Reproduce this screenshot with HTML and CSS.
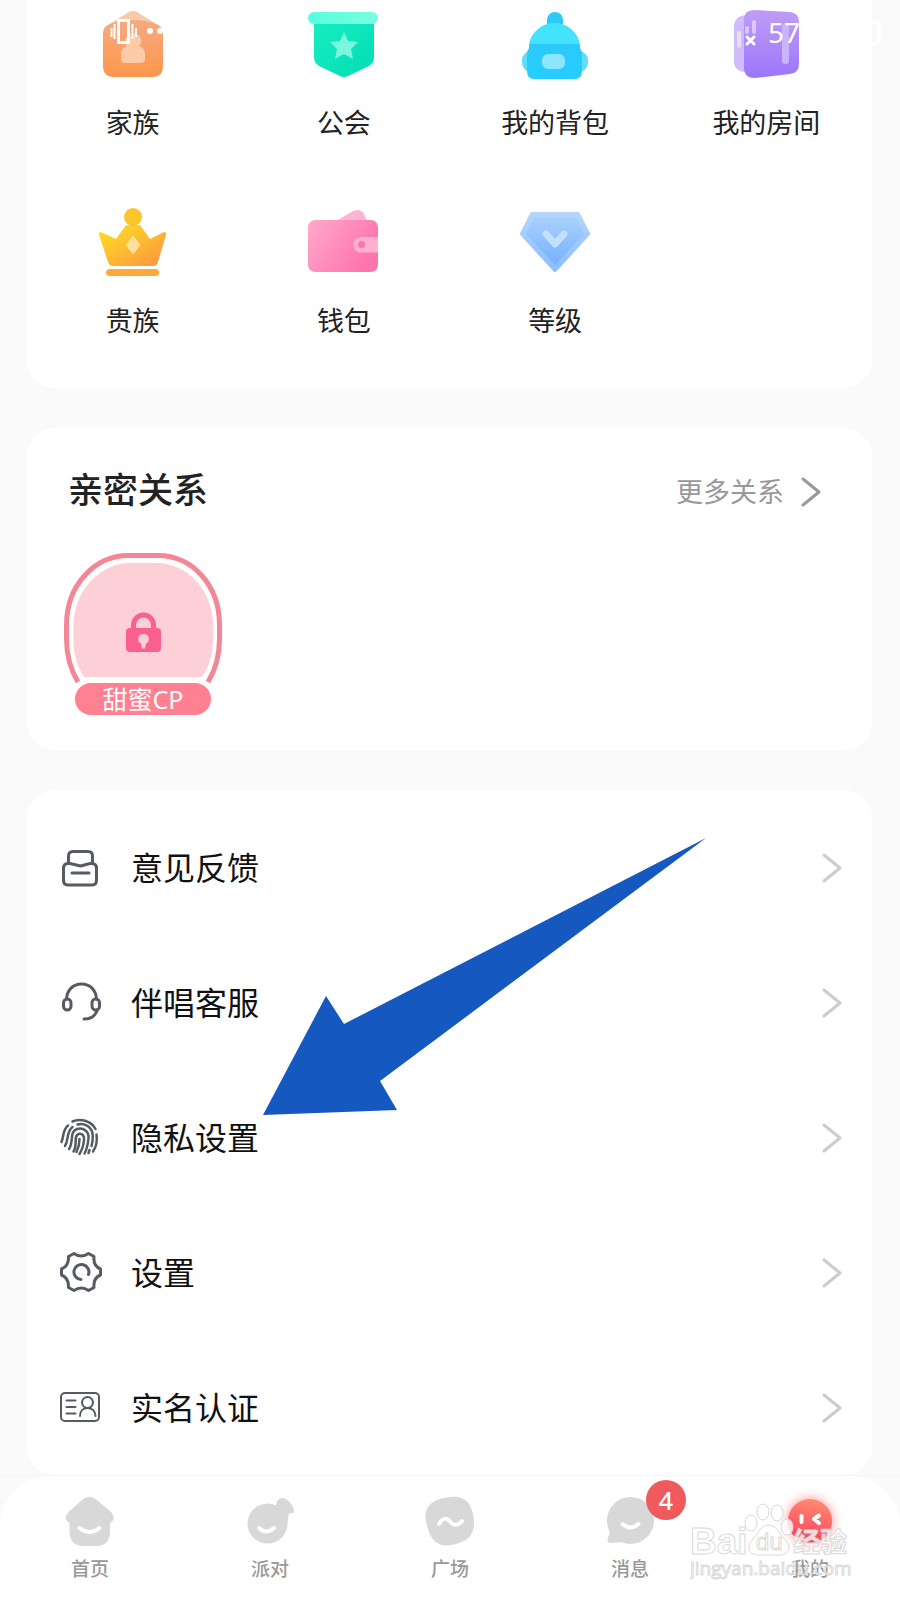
FILE: index.html
```html
<!DOCTYPE html>
<html lang="zh-CN">
<head>
<meta charset="utf-8">
<meta name="viewport" content="width=device-width, initial-scale=1">
<title>我的</title>
<link rel="stylesheet" href="styles.css">
</head>
<body>
<div class="status">
  <svg class="status-left" viewBox="0 0 56 32" aria-hidden="true">
    <rect x="8.500" y="6.500" width="10" height="22" fill="none" stroke="#fff" stroke-width="3"/>
    <path d="M1.500 14v9M4.500 10v15M22.500 10v15M26 14v9" stroke="#fff" stroke-width="2"/>
    <circle cx="40" cy="17" r="3" fill="#fff"/><circle cx="50" cy="17" r="3" fill="#fff"/>
  </svg>
  <div class="status-right">
    <svg class="signal" viewBox="0 0 32 32" aria-hidden="true">
      <path d="M7 17v13M15 12v4M22 6v10" stroke="#fff" stroke-opacity=".5" stroke-width="4" stroke-linecap="round"/>
      <path d="M15 21l7 7M22 21l-7 7" stroke="#fff" stroke-width="3" stroke-linecap="round"/>
    </svg>
    <span class="battery-level">57</span>
    <svg class="battery" viewBox="0 0 32 32" aria-hidden="true"><rect x="3" y="6" width="27" height="22" rx="3" fill="none" stroke="#fff" stroke-width="3"/></svg>
  </div>
</div>

<main class="page">
  <section class="card features">
    <a class="feature" href="#family">
      <svg class="feature-icon" viewBox="0 0 80 80" aria-hidden="true">
        <defs><linearGradient id="g1" x1="0" y1="0" x2="0" y2="1"><stop offset="0" stop-color="#f5aa80"/><stop offset="1" stop-color="#ff974c"/></linearGradient></defs>
        <path d="M12 27 36 12q4-2 8 0l24 15-10 12H20z" fill="#f8c9aa"/>
        <path d="M10 34c0-7 3-8 9-11 12-4 30-4 42 0 6 3 9 4 9 11v32q0 11-11 11H21Q10 77 10 66z" fill="url(#g1)"/>
        <path d="M40 34a7 7 0 0 1 6 12q6 2 6 8v5q0 4-4 4H32q-4 0-4-4v-5q0-6 6-8a7 7 0 0 1 6-12z" fill="#fbcba8"/>
      </svg>
      <span>家族</span>
    </a>
    <a class="feature" href="#guild">
      <svg class="feature-icon" viewBox="0 0 80 80" aria-hidden="true">
        <defs><linearGradient id="g2" x1="0" y1="0" x2="1" y2="1"><stop offset="0" stop-color="#18edc3"/><stop offset="1" stop-color="#02ddb2"/></linearGradient><linearGradient id="g2b"><stop offset="0" stop-color="#56ffdd"/><stop offset="1" stop-color="#78ffe1"/></linearGradient></defs>
        <path d="M10 20h60v37q0 6-5 9L44 76q-4 2-8 0L15 66q-5-3-5-9z" fill="url(#g2)"/>
        <rect x="4" y="12" width="70" height="12" rx="6" fill="url(#g2b)"/>
        <path d="M40 32l4 9 10 1-7 7 2 10-9-5-9 5 2-10-7-7 10-1z" fill="#78f7dc"/>
      </svg>
      <span>公会</span>
    </a>
    <a class="feature" href="#bag">
      <svg class="feature-icon" viewBox="0 0 80 80" aria-hidden="true">
        <defs><linearGradient id="g3" x1="0" y1="0" x2="0" y2="1"><stop offset="0" stop-color="#2cc9fb"/><stop offset="1" stop-color="#25ceff"/></linearGradient></defs>
        <path d="M32 24v-4a8 8 0 0 1 16 0v4z" fill="#2cc9fb"/>
        <rect x="7" y="51" width="66" height="21" rx="9" fill="#61dcfa"/>
        <path d="M14 50v-6a26 26 0 0 1 51 0v6z" fill="#43e2fd"/>
        <path d="M15 44h49q1 5 3 8v19q0 8-7 8H19q-7 0-7-8V52q2-3 3-8z" fill="url(#g3)"/>
        <rect x="27" y="54" width="23" height="15" rx="6" fill="#8be6ff"/>
      </svg>
      <span>我的背包</span>
    </a>
    <a class="feature" href="#room">
      <svg class="feature-icon" viewBox="0 0 80 80" aria-hidden="true">
        <defs><linearGradient id="g4" x1="0" y1="0" x2="0" y2="1"><stop offset="0" stop-color="#c09cf7"/><stop offset="1" stop-color="#9c76fb"/></linearGradient></defs>
        <path d="M22 15q-14 0-14 12v35q0 10 14 10z" fill="#d1bbfb"/>
        <path d="M18 20q0-10 10-10l36 2q9 1 9 10v42q0 9-9 10l-35 4q-11 0-11-10z" fill="url(#g4)"/>
        <rect x="56" y="23" width="7" height="41" rx="3.500" fill="#cab4fc"/>
      </svg>
      <span>我的房间</span>
    </a>
    <a class="feature" href="#noble">
      <svg class="feature-icon" viewBox="0 0 80 80" aria-hidden="true">
        <defs><linearGradient id="g5" x1="0" y1="0" x2="1" y2="1"><stop offset=".1" stop-color="#fedb24"/><stop offset="1" stop-color="#fc9242"/></linearGradient></defs>
        <path d="M8 34l15 7 10-14h14l10 14 14-7q3 0 2 3l-8 27q-1 4-5 4H20q-4 0-5-4L6 37q0-3 2-3z" fill="url(#g5)"/>
        <circle cx="40" cy="19" r="9" fill="#fdc42b"/>
        <rect x="13" y="71" width="53" height="7" rx="3.500" fill="#fdaa38"/>
        <path d="M40 38l7 9-7 9-7-9z" fill="#fee09a" stroke="#fee09a" stroke-linejoin="round"/>
      </svg>
      <span>贵族</span>
    </a>
    <a class="feature" href="#wallet">
      <svg class="feature-icon" viewBox="0 0 80 80" aria-hidden="true">
        <defs><linearGradient id="g6" x1="0" y1="0" x2="1" y2=".5"><stop offset="0" stop-color="#ffa9cb"/><stop offset="1" stop-color="#fe74ae"/></linearGradient></defs>
        <path d="M32 23l17-10q8-3 11 3l3 7z" fill="#fdb4d5"/>
        <rect x="4" y="22" width="70" height="52" rx="7" fill="url(#g6)"/>
        <path d="M74 39H57a7.700 7.700 0 0 0 0 15.500h17z" fill="#feb0d1"/><circle cx="57.500" cy="46.500" r="3.500" fill="#fd77af"/>
      </svg>
      <span>钱包</span>
    </a>
    <a class="feature" href="#level">
      <svg class="feature-icon" viewBox="0 0 80 80" aria-hidden="true">
        <defs><linearGradient id="g7" x1="0" y1="0" x2="0" y2="1"><stop offset="0" stop-color="#a9d0fd"/><stop offset="1" stop-color="#74b0ff"/></linearGradient><linearGradient id="g7b" x1="0" y1="0" x2="0" y2="1"><stop offset="0" stop-color="#b3d5fd"/><stop offset="1" stop-color="#8bbeff"/></linearGradient></defs>
        <path d="M17 16h46l10 20-33 36L7 36z" fill="url(#g7b)" stroke="url(#g7b)" stroke-width="4" stroke-linejoin="round"/>
        <path d="M19 20h42l8 16-29 31-29-31z" fill="url(#g7)"/>
        <path d="M31 36l9 10 9-10" fill="none" stroke="#c5e0ff" stroke-width="7" stroke-linecap="round" stroke-linejoin="round"/>
      </svg>
      <span>等级</span>
    </a>
  </section>

  <section class="card relations">
    <div class="relations-head">
      <h2>亲密关系</h2>
      <a class="more" href="#relations">更多关系
        <svg class="chevron" viewBox="0 0 20 32" aria-hidden="true"><path d="M2 3l16 13L2 29"/></svg>
      </a>
    </div>
    <button class="cp" type="button">
      <svg class="cp-frame" viewBox="0 0 158 130" aria-hidden="true">
        <path d="M20 124C12 112 9.500 100 9.500 86V72C9.500 38 36 10 66 10h26c32 0 57 28 57 62v14c0 14-3 26-11 38z" fill="#fdd0d8"/>
        <path d="M14 129C6 116 2.500 102 2.500 86V72C2.500 32 31 2.500 64 2.500h30c34 0 61.500 29.500 61.500 69.500v14c0 16-3.500 30-11.500 43" fill="none" stroke="#f48796" stroke-width="5"/>
        <path d="M69.500 78v-6a10 10 0 0 1 20 0v6" fill="none" stroke="#fa5f91" stroke-width="5"/>
        <rect x="62" y="75" width="35" height="24" rx="4" fill="#fa5f91"/>
        <path d="M79.500 81a5 5 0 0 1 2.500 9.500l-1 5h-3l-1-5a5 5 0 0 1 2.500-9.500z" fill="#fdd0d8"/>
      </svg>
      <span class="cp-name">甜蜜CP</span>
    </button>
  </section>

  <section class="card menu">
    <a class="row" href="#feedback">
      <svg class="row-icon" viewBox="0 0 44 44" aria-hidden="true"><path d="M10.500 17V10q0-4.500 4.500-4.500h15q4.500 0 4.500 4.500v7M12 17.500H10q-4.500 0-4.500 5V34q0 5 4.500 5h24q4.500 0 4.500-5V22.500q0-5-4.500-5h-2l-9.500 2.500zM14 27h17"/></svg>
      <span>意见反馈</span><svg class="chevron pale" viewBox="0 0 20 32" aria-hidden="true"><path d="M2 3l16 13L2 29"/></svg>
    </a>
    <a class="row" href="#service">
      <svg class="row-icon" viewBox="0 0 44 44" aria-hidden="true"><path d="M8.500 18C9 9 15 3 23.500 3S38 9 38.500 18M39 30c-2 5-6 8-13 8"/><rect x="5.500" y="18" width="7.500" height="11" rx="3.700"/><rect x="34" y="18" width="7.500" height="11" rx="3.700"/></svg>
      <span>伴唱客服</span><svg class="chevron pale" viewBox="0 0 20 32" aria-hidden="true"><path d="M2 3l16 13L2 29"/></svg>
    </a>
    <a class="row" href="#privacy">
      <svg class="row-icon finger" viewBox="0 0 44 44" aria-hidden="true"><path d="M14.500 5.500C22 2 33 4.500 37.500 13M10 9.500C4.500 14 6 20 3.500 26M38.500 18.500c1 7 0 12-3.500 17M7 30c4-6 1-14 7.500-19M19.500 8.500c8-2 15 3 15.300 11.500 0 4-.3 7-1.300 10M31.500 34l-1 3M11 33c5-7 0-17 8-20 7-2 12 3 11.500 9-.5 6-1.500 11-4 15.500M15.500 35.500C20 29 15 20 20.500 18c4-1 6 2 5.500 6-.5 6-2 10-4.500 14M21.500 23c0 5-1 9-3 13"/></svg>
      <span>隐私设置</span><svg class="chevron pale" viewBox="0 0 20 32" aria-hidden="true"><path d="M2 3l16 13L2 29"/></svg>
    </a>
    <a class="row" href="#settings">
      <svg class="row-icon" viewBox="0 0 44 44" aria-hidden="true"><path d="M42.500 24q-7.500 3-6.500 12.500L30.500 39.500q-7-5-14.500 0L10.500 36.500Q11 27 3.500 24V18Q11 15 10.500 5.500L16 2.500q7 5 14.500 0L36 5.500Q35 15 42.500 18zM30.500 23.500A7.500 7.500 0 1 0 23 28.500"/></svg>
      <span>设置</span><svg class="chevron pale" viewBox="0 0 20 32" aria-hidden="true"><path d="M2 3l16 13L2 29"/></svg>
    </a>
    <a class="row" href="#verify">
      <svg class="row-icon thin" viewBox="0 0 44 44" aria-hidden="true"><rect x="3" y="7" width="38" height="28" rx="4"/><path d="M8.500 14.500h9M8.500 21h9M8.500 27.500h9M22 30c0-5 3-8 7.500-8s8 3 8 8"/><circle cx="29.500" cy="16.500" r="5.500"/></svg>
      <span>实名认证</span><svg class="chevron pale" viewBox="0 0 20 32" aria-hidden="true"><path d="M2 3l16 13L2 29"/></svg>
    </a>
    <svg class="pointer" viewBox="0 0 443 277" aria-hidden="true"><path d="M443 0 81 186 63 158 0 277l134-5-17-29z" fill="#1558c0"/></svg>
  </section>
</main>

<div class="dock">
  <nav class="tabs">
    <a class="tab" href="#home">
      <svg class="tab-icon" viewBox="0 0 52 52" aria-hidden="true"><path d="M18 5q7-6 15 0l14 12q6 7-1 11v8q0 15-14 15H20Q5.500 51 5.500 36v-8q-7-4-1-11z" fill="#d8d8d8"/><path class="smile" d="M15.500 33q10 8 20 0"/></svg>
      <span>首页</span>
    </a>
    <a class="tab" href="#party">
      <svg class="tab-icon" viewBox="0 0 52 52" aria-hidden="true"><circle cx="23.500" cy="28.500" r="20" fill="#d8d8d8"/><path d="M32 10q1-8 8-7 9 5 10 13 0 3-5 2l-2 13-11-18z" fill="#d8d8d8"/><path class="smile" d="M15 33q7 7 15 0"/></svg>
      <span>派对</span>
    </a>
    <a class="tab" href="#plaza">
      <svg class="tab-icon" viewBox="0 0 52 52" aria-hidden="true"><path d="M26 2c13-2 20 5 22.500 15 3 13 3 26-13.500 31-16 6-27 1-31-14C1 25 0 19 4 12 9 5 17 3 26 2z" fill="#d8d8d8"/><path class="smile" d="M15 29c4-7 8-6 11.500-2s7.500 4 11.500-1"/></svg>
      <span>广场</span>
    </a>
    <a class="tab" href="#messages">
      <span class="icon-wrap">
        <svg class="tab-icon" viewBox="0 0 52 52" aria-hidden="true"><circle cx="26.500" cy="25.500" r="23.500" fill="#d8d8d8"/><path d="M4 32q3 6 0 10-2 6 4 6 5 0 12-2z" fill="#d8d8d8"/><path class="smile" d="M18.500 29q8 7 16 0"/></svg>
        <b class="badge">4</b>
      </span>
      <span>消息</span>
    </a>
    <a class="tab" href="#me">
      <svg class="tab-icon glow" viewBox="0 0 52 52" aria-hidden="true"><defs><linearGradient id="g8" x1=".6" y1="0" x2=".4" y2="1"><stop offset="0" stop-color="#ff8b70"/><stop offset="1" stop-color="#fa3f5e"/></linearGradient></defs><circle cx="26" cy="26" r="22" fill="url(#g8)"/><path class="smile" d="M17.500 21v6M35 20.500l-5 3.500 5 4"/></svg>
      <span>我的</span>
    </a>
  </nav>
  <svg class="watermark" viewBox="0 0 164 84" aria-hidden="true">
    <g fill="#fff" fill-opacity=".8" stroke="#d9d9d9">
      <text class="wm-big" x="0" y="54">Bai</text>
      <ellipse cx="61" cy="23" rx="6" ry="8"/><ellipse cx="73" cy="12" rx="6" ry="8"/><ellipse cx="87" cy="13" rx="6" ry="8"/><ellipse cx="97" cy="27" rx="6" ry="8"/>
      <path d="M78 25c10 0 12 11 18 16 6 7 2 14-6 14H68c-9 0-12-8-6-15 6-5 8-15 16-15z"/>
      <text class="wm-du" x="66" y="50">du</text>
      <text class="wm-cn" x="103" y="52">经验</text>
      <text class="wm-url" x="0" y="75">jingyan.baidu.com</text>
    </g>
  </svg>
</div>
</body>
</html>
```
FILE: styles.css
```css
* { box-sizing: border-box; }

body {
  position: relative;
  margin: 0;
  min-height: 100vh;
  display: flex;
  flex-direction: column;
  background: #fafafa;
  color: #222;
  font-family: "Noto Sans", "Noto Sans CJK SC", sans-serif;
}

a { color: inherit; text-decoration: none; }
svg { display: block; flex: none; }

/* Status bar laid over the page */
.status {
  position: absolute;
  z-index: 2;
  top: 14px;
  left: 110px;
  right: 19px;
  display: flex;
  justify-content: space-between;
  color: #fff;
  pointer-events: none;
}
.status-left { width: 56px; height: 32px; }
.status-right { display: flex; align-items: center; width: 149px; }
.signal, .battery { width: 32px; height: 32px; }
.battery { margin-left: auto; }
.battery-level { margin-left: 4px; font-size: 28px; line-height: 36px; }

.page {
  flex: 1;
  display: flex;
  flex-direction: column;
  gap: 40px;
  padding: 0 28px 0 27px;
}

.card { background: #fff; border-radius: 28px; }

.features {
  display: grid;
  grid-template-columns: repeat(4, 1fr);
  row-gap: 57px;
  padding-bottom: 49px;
  border-radius: 0 0 28px 28px;
}
.feature {
  display: flex;
  flex-direction: column;
  align-items: center;
  gap: 25px;
  font-size: 27px;
  line-height: 36px;
}
.feature-icon { width: 80px; height: 80px; }

.relations { padding: 38px 51px 35px 37px; }
.relations-head {
  display: flex;
  justify-content: space-between;
  align-items: center;
  height: 48px;
  margin-bottom: 39px;
  padding-left: 4px;
}
.relations-head h2 { margin: 0; font-size: 35px; font-weight: 500; line-height: 48px; }
.more {
  display: flex;
  align-items: center;
  gap: 17px;
  padding-top: 4px;
  color: #999;
  font-size: 27px;
  line-height: 48px;
}

.chevron {
  width: 20px;
  height: 32px;
  fill: none;
  stroke: #999;
  stroke-width: 3;
  stroke-linecap: round;
  stroke-linejoin: round;
}
.pale { margin-left: auto; stroke: #ccc; }

.cp {
  display: flex;
  flex-direction: column;
  align-items: center;
  width: 158px;
  padding: 0;
  border: 0;
  background: none;
  color: #fff;
  font-family: inherit;
}
.cp-frame { width: 158px; height: 130px; }
.cp-name {
  width: 136px;
  border-radius: 16px;
  background: #ff8090;
  box-shadow: 0 0 0 4px #fff;
  font-size: 25px;
  font-weight: 400;
  line-height: 32px;
}

.menu {
  position: relative;
  padding: 10px 30px 0 31px;
  color: #111;
}
.row {
  display: flex;
  align-items: center;
  height: 135px;
  font-size: 32px;
  line-height: 44px;
}
.row-icon {
  width: 44px;
  height: 44px;
  margin-right: 29px;
  fill: none;
  stroke: #555b61;
  stroke-width: 3;
  stroke-linecap: round;
  stroke-linejoin: round;
}
.thin { stroke-width: 2; }
.finger { stroke-width: 2.5; }
.pointer {
  position: absolute;
  top: 48px;
  left: 236px;
  width: 443px;
  height: 277px;
  pointer-events: none;
}

.dock { position: relative; border-top: 1px solid #f5f5f5; }
.tabs {
  display: grid;
  grid-template-columns: repeat(5, 1fr);
  padding: 19px 0;
  border-radius: 50px 50px 0 0;
  background: #fff;
}
.tab {
  display: flex;
  flex-direction: column;
  align-items: center;
  gap: 10px;
  color: #999;
  font-size: 19px;
  font-weight: 500;
  line-height: 24px;
}
.tab-icon { width: 52px; height: 52px; }
.glow { filter: drop-shadow(0 0 6px #ff8a8a); }
.smile {
  fill: none;
  stroke: #fff;
  stroke-width: 4;
  stroke-linecap: round;
  stroke-linejoin: round;
}
.icon-wrap { position: relative; }
.badge {
  position: absolute;
  top: -15px;
  left: 42px;
  width: 40px;
  height: 40px;
  border-radius: 50%;
  background: #f15a5c;
  color: #fff;
  font-size: 25px;
  font-weight: 500;
  line-height: 40px;
  text-align: center;
}

.watermark {
  position: absolute;
  right: 46px;
  bottom: 16px;
  width: 164px;
  height: 84px;
  pointer-events: none;
}
.wm-big { font: bold 37px "Liberation Sans", sans-serif; }
.wm-du { font: 24px "Liberation Sans", sans-serif; }
.wm-cn { font: bold 27px "Noto Sans CJK SC", sans-serif; }
.wm-url { font: 19px "Open Sans", sans-serif; }
```
